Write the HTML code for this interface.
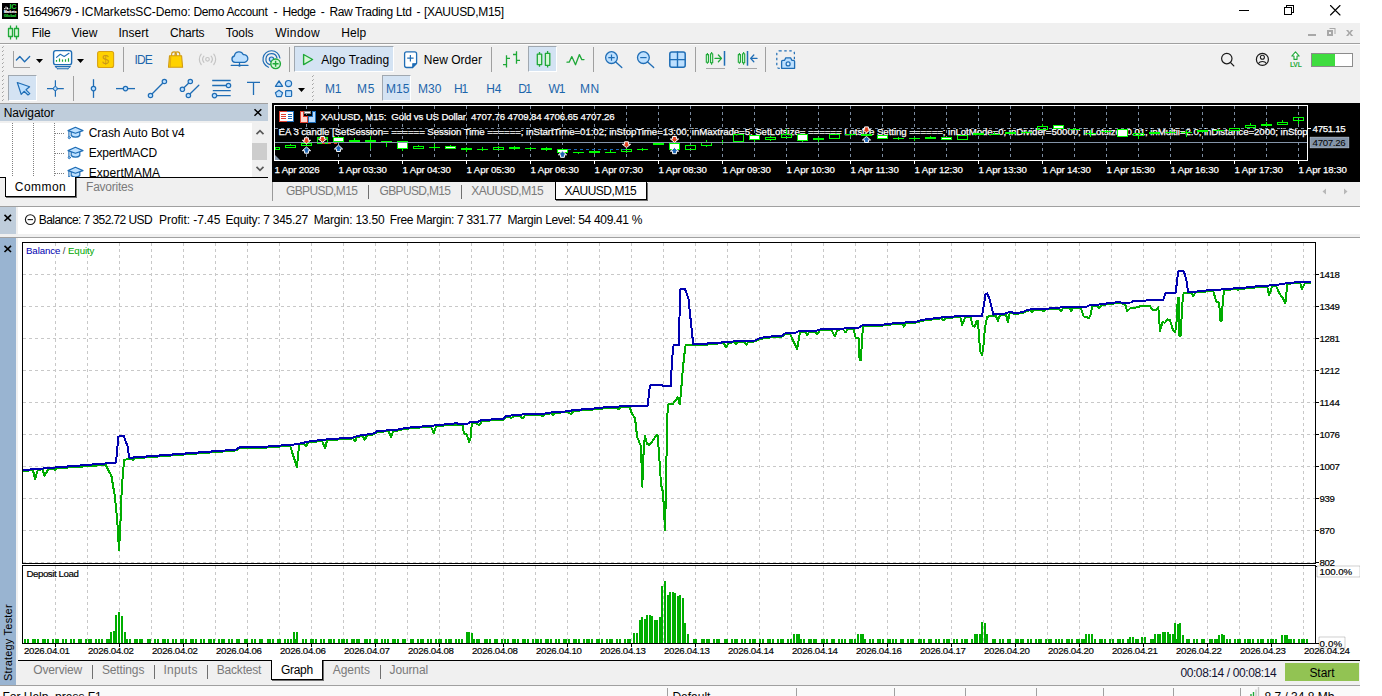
<!DOCTYPE html>
<html lang="en"><head><meta charset="utf-8"><title>MetaTrader 5</title><style>
*{box-sizing:border-box;margin:0;padding:0}
html,body{width:1382px;height:696px;overflow:hidden;background:#fff}
body{font-family:"Liberation Sans",sans-serif;font-size:12px;color:#000;position:relative}
.abs{position:absolute}
.t{position:absolute;white-space:pre;line-height:14px;height:14px}
.win{position:absolute;left:0;top:0;width:1360px;height:696px;background:#f0f0f0;overflow:hidden}
.hl{position:absolute;height:1px;background:#a0a0a0}
.vl{position:absolute;width:1px;background:#a0a0a0}
.sel{position:absolute;background:#d4e3f3;border-left:1px solid #a0a8b0;border-top:1px solid #a0a8b0;border-right:1px solid #fff;border-bottom:1px solid #fff}
.tf{color:#1c65ab}
.gr{color:#7a7a7a}
</style></head><body>
<div class="win">
<div class="abs" style="left:0;top:0;width:1360px;height:23px;background:#fff"></div>
<div class="t " style="left:23.2px;top:4.5px;letter-spacing:-0.727px;">51649679</div>
<div class="t " style="left:75.0px;top:4.5px;">-</div>
<div class="t " style="left:81.6px;top:4.5px;letter-spacing:-0.105px;">ICMarketsSC-Demo:</div>
<div class="t " style="left:193.4px;top:4.5px;letter-spacing:-0.332px;">Demo Account</div>
<div class="t " style="left:273.6px;top:4.5px;">-</div>
<div class="t " style="left:282.6px;top:4.5px;letter-spacing:-0.494px;">Hedge</div>
<div class="t " style="left:320.8px;top:4.5px;">-</div>
<div class="t " style="left:329.4px;top:4.5px;letter-spacing:-0.349px;">Raw Trading Ltd</div>
<div class="t " style="left:416.6px;top:4.5px;">-</div>
<div class="t " style="left:423.9px;top:4.5px;letter-spacing:-0.287px;">[XAUUSD,M15]</div>
<div class="t " style="left:31.8px;top:26px;letter-spacing:-0.181px;">File</div>
<div class="t " style="left:71.4px;top:26px;letter-spacing:0.068px;">View</div>
<div class="t " style="left:118.4px;top:26px;letter-spacing:0.037px;">Insert</div>
<div class="t " style="left:169.9px;top:26px;letter-spacing:-0.129px;">Charts</div>
<div class="t " style="left:225.7px;top:26px;letter-spacing:-0.029px;">Tools</div>
<div class="t " style="left:275.2px;top:26px;letter-spacing:0.342px;">Window</div>
<div class="t " style="left:341.2px;top:26px;letter-spacing:0.137px;">Help</div>
<div class="hl" style="left:0;top:43px;width:1360px"></div>
<div class="hl" style="left:0;top:44px;width:1360px;background:#fcfcfc"></div>
<div class="vl" style="left:123px;top:47px;height:25px"></div>
<div class="vl" style="left:289px;top:47px;height:25px"></div>
<div class="vl" style="left:491px;top:47px;height:25px"></div>
<div class="vl" style="left:593px;top:47px;height:25px"></div>
<div class="vl" style="left:695px;top:47px;height:25px"></div>
<div class="vl" style="left:765px;top:47px;height:25px"></div>
<div class="vl" style="left:73px;top:76px;height:25px"></div>
<div class="sel" style="left:294px;top:46px;width:100px;height:26px"></div>
<div class="sel" style="left:528px;top:46px;width:29px;height:26px"></div>
<div class="sel" style="left:8px;top:75px;width:29px;height:26px"></div>
<div class="sel" style="left:382px;top:75px;width:29px;height:26px"></div>
<div class="t tf" style="left:134.4px;top:53px;letter-spacing:-0.808px;">IDE</div>
<div class="t " style="left:321.3px;top:53px;letter-spacing:0.046px;">Algo Trading</div>
<div class="t " style="left:423.8px;top:53px;letter-spacing:0.011px;">New Order</div>
<div class="t tf" style="left:325.0px;top:81.5px;letter-spacing:-0.272px;">M1</div>
<div class="t tf" style="left:357.1px;top:81.5px;letter-spacing:0.628px;">M5</div>
<div class="t tf" style="left:386.1px;top:81.5px;letter-spacing:-0.022px;">M15</div>
<div class="t tf" style="left:418.0px;top:81.5px;letter-spacing:0.078px;">M30</div>
<div class="t tf" style="left:454.1px;top:81.5px;letter-spacing:-1.144px;">H1</div>
<div class="t tf" style="left:486.3px;top:81.5px;letter-spacing:-0.244px;">H4</div>
<div class="t tf" style="left:518.3px;top:81.5px;letter-spacing:-1.644px;">D1</div>
<div class="t tf" style="left:548.4px;top:81.5px;letter-spacing:-0.900px;">W1</div>
<div class="t tf" style="left:579.9px;top:81.5px;letter-spacing:0.728px;">MN</div>
<div class="hl" style="left:0;top:103px;width:268px"></div>
<div class="abs" style="left:0;top:104px;width:268px;height:17px;background:#bfcddb"></div>
<div class="t " style="left:3.7px;top:105.5px;letter-spacing:-0.082px;">Navigator</div>
<div class="abs" style="left:0;top:123px;width:252px;height:54px;background:#fff;overflow:hidden"><div class="t " style="left:88.7px;top:2.6999999999999993px;letter-spacing:-0.046px;">Crash Auto Bot v4</div><div class="t " style="left:88.7px;top:22.799999999999997px;letter-spacing:-0.180px;">ExpertMACD</div><div class="t " style="left:88.7px;top:42.9px;letter-spacing:0.079px;">ExpertMAMA</div></div>
<div class="abs" style="left:252px;top:123px;width:16px;height:54px;background:#f0f0f0"></div>
<div class="abs" style="left:252px;top:143px;width:15px;height:17px;background:#cdcdcd"></div>
<div class="abs" style="left:0;top:177px;width:268px;height:1px;background:#000"></div>
<div class="abs" style="left:5px;top:177px;width:71px;height:20px;background:#fff;border:1px solid #000;border-top:none;box-shadow:1px 1px 0 #707070"></div>
<div class="t " style="left:14.8px;top:179.5px;letter-spacing:0.463px;">Common</div>
<div class="t gr" style="left:86.1px;top:179.5px;letter-spacing:-0.257px;">Favorites</div>
<svg class="abs" style="left:272px;top:103px" width="1088" height="79" viewBox="272 103 1088 79">
<rect x="272" y="103" width="1088" height="79" fill="#000"/>
<g stroke="#7c8ca0" stroke-width="1" stroke-dasharray="3 3" shape-rendering="crispEdges"><line x1="306.5" y1="106" x2="306.5" y2="160"/><line x1="338.5" y1="106" x2="338.5" y2="160"/><line x1="370.5" y1="106" x2="370.5" y2="160"/><line x1="402.5" y1="106" x2="402.5" y2="160"/><line x1="434.5" y1="106" x2="434.5" y2="160"/><line x1="466.5" y1="106" x2="466.5" y2="160"/><line x1="498.5" y1="106" x2="498.5" y2="160"/><line x1="530.5" y1="106" x2="530.5" y2="160"/><line x1="562.5" y1="106" x2="562.5" y2="160"/><line x1="594.5" y1="106" x2="594.5" y2="160"/><line x1="626.5" y1="106" x2="626.5" y2="160"/><line x1="658.5" y1="106" x2="658.5" y2="160"/><line x1="690.5" y1="106" x2="690.5" y2="160"/><line x1="722.5" y1="106" x2="722.5" y2="160"/><line x1="754.5" y1="106" x2="754.5" y2="160"/><line x1="786.5" y1="106" x2="786.5" y2="160"/><line x1="818.5" y1="106" x2="818.5" y2="160"/><line x1="850.5" y1="106" x2="850.5" y2="160"/><line x1="882.5" y1="106" x2="882.5" y2="160"/><line x1="914.5" y1="106" x2="914.5" y2="160"/><line x1="946.5" y1="106" x2="946.5" y2="160"/><line x1="978.5" y1="106" x2="978.5" y2="160"/><line x1="1010.5" y1="106" x2="1010.5" y2="160"/><line x1="1042.5" y1="106" x2="1042.5" y2="160"/><line x1="1074.5" y1="106" x2="1074.5" y2="160"/><line x1="1106.5" y1="106" x2="1106.5" y2="160"/><line x1="1138.5" y1="106" x2="1138.5" y2="160"/><line x1="1170.5" y1="106" x2="1170.5" y2="160"/><line x1="1202.5" y1="106" x2="1202.5" y2="160"/><line x1="1234.5" y1="106" x2="1234.5" y2="160"/><line x1="1266.5" y1="106" x2="1266.5" y2="160"/><line x1="1298.5" y1="106" x2="1298.5" y2="160"/>
<line x1="275" y1="128.5" x2="1307" y2="128.5"/></g>
<g font-family="'Liberation Sans',sans-serif" font-size="9.7" fill="#fff" stroke="#fff" stroke-width="0.25"><svg x="275" y="124" width="1032" height="14" viewBox="275 124 1032 14"><text x="278.5" y="135" textLength="1057" lengthAdjust="spacing">EA 3 candle [SetSession= ====== Session Time ======; inStartTime=01:02; inStopTime=13:00; inMaxtrade=5; SetLotsize= ====== Lotsize Setting ======; inLotMode=0; inDivider=50000; inLotsize=0.01; inMultii=2.0; inDistance=2000; inStoploss=0</text></svg></g>
<g stroke="#00ff00" stroke-width="1" fill="none" shape-rendering="crispEdges"><rect x="275.5" y="147.5" width="4.0" height="2" fill="none"/><line x1="290.5" y1="144" x2="290.5" y2="145"/><rect x="285.5" y="145.5" width="10.0" height="2" fill="none"/><rect x="301.5" y="143.5" width="10.0" height="2" fill="none"/><rect x="317.5" y="137.5" width="10.0" height="6" fill="none"/><rect x="333.5" y="137.5" width="10.0" height="4" fill="#fff"/><line x1="354.5" y1="138" x2="354.5" y2="140"/><rect x="349.5" y="140.5" width="10.0" height="1" fill="none"/><rect x="365.0" y="140" width="11" height="2" fill="#00ff00" stroke="none"/><line x1="370.5" y1="136" x2="370.5" y2="149"/><line x1="381.0" y1="141.5" x2="392.0" y2="141.5"/><line x1="386.5" y1="141" x2="386.5" y2="147"/><line x1="402.5" y1="149" x2="402.5" y2="151"/><rect x="397.5" y="141.5" width="10.0" height="7" fill="#fff"/><line x1="418.5" y1="145" x2="418.5" y2="146"/><rect x="413.5" y="146.5" width="10.0" height="2" fill="none"/><line x1="429.0" y1="147.5" x2="440.0" y2="147.5"/><line x1="434.5" y1="144" x2="434.5" y2="149"/><line x1="450.5" y1="145" x2="450.5" y2="146"/><rect x="445.5" y="146.5" width="10.0" height="2" fill="#fff"/><rect x="461.0" y="148" width="11" height="2" fill="#00ff00" stroke="none"/><line x1="466.5" y1="147" x2="466.5" y2="152"/><line x1="477.0" y1="149.5" x2="488.0" y2="149.5"/><line x1="482.5" y1="147" x2="482.5" y2="151"/><line x1="498.5" y1="146" x2="498.5" y2="147"/><rect x="493.5" y="147.5" width="10.0" height="2" fill="none"/><rect x="509.0" y="147" width="11" height="2" fill="#00ff00" stroke="none"/><line x1="514.5" y1="146" x2="514.5" y2="150"/><line x1="525.0" y1="148.5" x2="536.0" y2="148.5"/><line x1="530.5" y1="147" x2="530.5" y2="150"/><rect x="541.0" y="148" width="11" height="2" fill="#00ff00" stroke="none"/><line x1="546.5" y1="147" x2="546.5" y2="151"/><rect x="557.5" y="149.5" width="10.0" height="3" fill="#fff"/><line x1="573.0" y1="152.5" x2="584.0" y2="152.5"/><line x1="578.5" y1="152" x2="578.5" y2="154"/><rect x="589.0" y="151" width="11" height="2" fill="#00ff00" stroke="none"/><line x1="594.5" y1="152" x2="594.5" y2="154"/><line x1="605.0" y1="152.5" x2="616.0" y2="152.5"/><line x1="610.5" y1="150" x2="610.5" y2="153"/><line x1="626.5" y1="152" x2="626.5" y2="153"/><rect x="621.5" y="149.5" width="10.0" height="2" fill="none"/><line x1="637.0" y1="149.5" x2="648.0" y2="149.5"/><line x1="642.5" y1="148" x2="642.5" y2="151"/><rect x="653.0" y="143" width="11" height="2" fill="#00ff00" stroke="none"/><line x1="658.5" y1="143" x2="658.5" y2="145"/><rect x="669.5" y="143.5" width="10.0" height="6" fill="#fff"/><rect x="685.5" y="145.5" width="10.0" height="4" fill="none"/><line x1="706.5" y1="140" x2="706.5" y2="142"/><line x1="706.5" y1="146" x2="706.5" y2="147"/><rect x="701.5" y="142.5" width="10.0" height="3" fill="none"/><line x1="717.0" y1="142.5" x2="728.0" y2="142.5"/><line x1="722.5" y1="140" x2="722.5" y2="144"/><rect x="733.5" y="134.5" width="10.0" height="7" fill="none"/><line x1="754.5" y1="140" x2="754.5" y2="142"/><rect x="749.5" y="135.5" width="10.0" height="4" fill="#fff"/><line x1="770.5" y1="136" x2="770.5" y2="137"/><line x1="770.5" y1="140" x2="770.5" y2="141"/><rect x="765.5" y="137.5" width="10.0" height="2" fill="none"/><line x1="786.5" y1="129" x2="786.5" y2="134"/><rect x="781.5" y="134.5" width="10.0" height="3" fill="none"/><line x1="802.5" y1="141" x2="802.5" y2="142"/><rect x="797.5" y="134.5" width="10.0" height="6" fill="#fff"/><line x1="818.5" y1="137" x2="818.5" y2="138"/><line x1="818.5" y1="140" x2="818.5" y2="142"/><rect x="813.5" y="138.5" width="10.0" height="1" fill="none"/><rect x="829.5" y="134.5" width="10.0" height="4" fill="none"/><line x1="845.0" y1="134.5" x2="856.0" y2="134.5"/><line x1="850.5" y1="134" x2="850.5" y2="137"/><rect x="861.5" y="134.5" width="10.0" height="1" fill="none"/><rect x="877.5" y="135.5" width="10.0" height="3" fill="#fff"/><line x1="893.0" y1="138.5" x2="904.0" y2="138.5"/><line x1="898.5" y1="137" x2="898.5" y2="140"/><line x1="909.0" y1="138.5" x2="920.0" y2="138.5"/><line x1="914.5" y1="137" x2="914.5" y2="141"/><rect x="925.0" y="137" width="11" height="2" fill="#00ff00" stroke="none"/><line x1="930.5" y1="136" x2="930.5" y2="138"/><rect x="941.5" y="137.5" width="10.0" height="2" fill="#fff"/><rect x="957.5" y="135.5" width="10.0" height="4" fill="none"/><rect x="973.5" y="133.5" width="10.0" height="1" fill="none"/><line x1="989.0" y1="134.5" x2="1000.0" y2="134.5"/><line x1="994.5" y1="132" x2="994.5" y2="135"/><rect x="1005.5" y="132.5" width="10.0" height="1" fill="none"/><line x1="1021.0" y1="132.5" x2="1032.0" y2="132.5"/><line x1="1026.5" y1="131" x2="1026.5" y2="134"/><line x1="1042.5" y1="124" x2="1042.5" y2="126"/><rect x="1037.5" y="126.5" width="10.0" height="3" fill="none"/><rect x="1053.5" y="125.5" width="10.0" height="3" fill="#fff"/><line x1="1069.0" y1="129.5" x2="1080.0" y2="129.5"/><line x1="1074.5" y1="128" x2="1074.5" y2="130"/><line x1="1085.0" y1="133.5" x2="1096.0" y2="133.5"/><line x1="1090.5" y1="130" x2="1090.5" y2="137"/><line x1="1101.0" y1="131.5" x2="1112.0" y2="131.5"/><line x1="1106.5" y1="130" x2="1106.5" y2="133"/><rect x="1117.5" y="129.5" width="10.0" height="7" fill="#fff"/><line x1="1138.5" y1="136" x2="1138.5" y2="139"/><rect x="1133.5" y="133.5" width="10.0" height="2" fill="none"/><rect x="1149.0" y="132" width="11" height="2" fill="#00ff00" stroke="none"/><line x1="1154.5" y1="132" x2="1154.5" y2="134"/><line x1="1165.0" y1="132.5" x2="1176.0" y2="132.5"/><line x1="1170.5" y1="131" x2="1170.5" y2="133"/><line x1="1181.0" y1="132.5" x2="1192.0" y2="132.5"/><line x1="1186.5" y1="130" x2="1186.5" y2="137"/><rect x="1197.5" y="130.5" width="10.0" height="1" fill="none"/><line x1="1213.0" y1="130.5" x2="1224.0" y2="130.5"/><line x1="1218.5" y1="129" x2="1218.5" y2="131"/><rect x="1229.5" y="128.5" width="10.0" height="2" fill="none"/><line x1="1250.5" y1="123" x2="1250.5" y2="125"/><rect x="1245.5" y="125.5" width="10.0" height="2" fill="none"/><rect x="1261.0" y="124" width="11" height="2" fill="#00ff00" stroke="none"/><line x1="1266.5" y1="122" x2="1266.5" y2="126"/><line x1="1282.5" y1="120" x2="1282.5" y2="122"/><rect x="1277.5" y="122.5" width="10.0" height="2" fill="none"/><line x1="1298.5" y1="121" x2="1298.5" y2="124"/><rect x="1293.5" y="117.5" width="10.0" height="3" fill="none"/></g>
<line x1="275" y1="142.5" x2="1307" y2="142.5" stroke="#8494a8" shape-rendering="crispEdges"/>
<line x1="322" y1="143.5" x2="337" y2="143.5" stroke="#e2401c" stroke-dasharray="3 3" shape-rendering="crispEdges"/>
<line x1="568" y1="149.5" x2="626" y2="149.5" stroke="#1c64b4" stroke-dasharray="3 3" shape-rendering="crispEdges"/>
<path d="M304.6 137.8H308.4V140.3H310.6L306.5 143.79999999999998L302.4 140.3H304.6Z" fill="#e2401c" stroke="#fff" stroke-width="1" stroke-linejoin="miter"/><path d="M320.6 136.5H324.4V139.0H326.6L322.5 142.2L318.4 139.0H320.6Z" fill="#e2401c" stroke="#fff" stroke-width="1" stroke-linejoin="miter"/><path d="M624.6 141.8H628.4V144.3H630.6L626.5 147.6L622.4 144.3H624.6Z" fill="#e2401c" stroke="#fff" stroke-width="1" stroke-linejoin="miter"/><path d="M672.6 136.5H676.4V139.0H678.6L674.5 142.4L670.4 139.0H672.6Z" fill="#e2401c" stroke="#fff" stroke-width="1" stroke-linejoin="miter"/><path d="M864.6 126.9H868.4V129.4H870.6L866.5 132.79999999999998L862.4 129.4H864.6Z" fill="#e2401c" stroke="#fff" stroke-width="1" stroke-linejoin="miter"/><path d="M304.6 153.2H308.4V150.7H310.6L306.5 147.0L302.4 150.7H304.6Z" fill="#1c64b4" stroke="#fff" stroke-width="1" stroke-linejoin="miter"/><path d="M336.6 151.5H340.4V149.0H342.6L338.5 145.1L334.4 149.0H336.6Z" fill="#1c64b4" stroke="#fff" stroke-width="1" stroke-linejoin="miter"/><path d="M560.6 157.3H564.4V154.8H566.6L562.5 151.0L558.4 154.8H560.6Z" fill="#1c64b4" stroke="#fff" stroke-width="1" stroke-linejoin="miter"/><path d="M672.6 153.7H676.4V151.2H678.6L674.5 147.6L670.4 151.2H672.6Z" fill="#1c64b4" stroke="#fff" stroke-width="1" stroke-linejoin="miter"/><path d="M864.6 142.5H868.4V140.0H870.6L866.5 136.4L862.4 140.0H864.6Z" fill="#1c64b4" stroke="#fff" stroke-width="1" stroke-linejoin="miter"/>
<path d="M275 155L280 160H275Z" fill="#8494a8"/>
<g stroke="#fff" stroke-width="1" fill="none" shape-rendering="crispEdges"><path d="M274.5 160.5V105.5H1307.5V160.5"/><path d="M274 160.5H1308"/><line x1="338.5" y1="160" x2="338.5" y2="164"/><line x1="402.5" y1="160" x2="402.5" y2="164"/><line x1="466.5" y1="160" x2="466.5" y2="164"/><line x1="530.5" y1="160" x2="530.5" y2="164"/><line x1="594.5" y1="160" x2="594.5" y2="164"/><line x1="658.5" y1="160" x2="658.5" y2="164"/><line x1="722.5" y1="160" x2="722.5" y2="164"/><line x1="786.5" y1="160" x2="786.5" y2="164"/><line x1="850.5" y1="160" x2="850.5" y2="164"/><line x1="914.5" y1="160" x2="914.5" y2="164"/><line x1="978.5" y1="160" x2="978.5" y2="164"/><line x1="1042.5" y1="160" x2="1042.5" y2="164"/><line x1="1106.5" y1="160" x2="1106.5" y2="164"/><line x1="1170.5" y1="160" x2="1170.5" y2="164"/><line x1="1234.5" y1="160" x2="1234.5" y2="164"/><line x1="1298.5" y1="160" x2="1298.5" y2="164"/><line x1="1308" y1="128.5" x2="1311" y2="128.5"/></g>
<g font-family="'Liberation Sans',sans-serif" font-size="9.7" fill="#fff" stroke="#fff" stroke-width="0.25"><text x="274.5" y="172.6" textLength="45.2" lengthAdjust="spacing">1 Apr 2026</text><text x="338.5" y="172.6" textLength="48.3" lengthAdjust="spacing">1 Apr 03:30</text><text x="402.5" y="172.6" textLength="48.3" lengthAdjust="spacing">1 Apr 04:30</text><text x="466.5" y="172.6" textLength="48.3" lengthAdjust="spacing">1 Apr 05:30</text><text x="530.5" y="172.6" textLength="48.3" lengthAdjust="spacing">1 Apr 06:30</text><text x="594.5" y="172.6" textLength="48.3" lengthAdjust="spacing">1 Apr 07:30</text><text x="658.5" y="172.6" textLength="48.3" lengthAdjust="spacing">1 Apr 08:30</text><text x="722.5" y="172.6" textLength="48.3" lengthAdjust="spacing">1 Apr 09:30</text><text x="786.5" y="172.6" textLength="48.3" lengthAdjust="spacing">1 Apr 10:30</text><text x="850.5" y="172.6" textLength="48.3" lengthAdjust="spacing">1 Apr 11:30</text><text x="914.5" y="172.6" textLength="48.3" lengthAdjust="spacing">1 Apr 12:30</text><text x="978.5" y="172.6" textLength="48.3" lengthAdjust="spacing">1 Apr 13:30</text><text x="1042.5" y="172.6" textLength="48.3" lengthAdjust="spacing">1 Apr 14:30</text><text x="1106.5" y="172.6" textLength="48.3" lengthAdjust="spacing">1 Apr 15:30</text><text x="1170.5" y="172.6" textLength="48.3" lengthAdjust="spacing">1 Apr 16:30</text><text x="1234.5" y="172.6" textLength="48.3" lengthAdjust="spacing">1 Apr 17:30</text><text x="1298.5" y="172.6" textLength="48.3" lengthAdjust="spacing">1 Apr 18:30</text>
<text x="320.7" y="120" xml:space="preserve" textLength="294" lengthAdjust="spacing">XAUUSD, M15:  Gold vs US Dollar  4707.76 4709.84 4706.65 4707.26</text>
<text x="1312.6" y="132.3" textLength="33.1" lengthAdjust="spacing">4751.15</text>
<rect x="1310" y="137" width="39" height="11" fill="#8494a8"/><text x="1312.6" y="146.3" fill="#000" stroke="none" textLength="33.1" lengthAdjust="spacing">4707.26</text></g>
<g shape-rendering="crispEdges">
<rect x="279" y="111" width="8" height="11" fill="#e04030"/><rect x="287" y="111" width="7" height="11" fill="#1c6cb8"/><rect x="280" y="112" width="13" height="9" fill="#fff"/>
<path d="M281 114.5H286M281 116.5H286M281 118.5H286" stroke="#e04030"/><path d="M288 114.5H292M288 116.5H292M288 118.5H292" stroke="#1c6cb8"/>
<path d="M300 111H303V116H307V122H300Z" fill="#ffd8d0" stroke="#e04030"/><path d="M315 111H312V116H308V122H315Z" fill="#b8dcff" stroke="#1c6cb8"/><rect x="304" y="111" width="7" height="3" fill="#888"/><rect x="305" y="112" width="5" height="1" fill="#fff"/>
</g>
</svg>
<div class="vl" style="left:272px;top:182px;height:19px;background:#9a9a9a"></div>
<div class="t gr" style="left:285.9px;top:184px;letter-spacing:-0.584px;">GBPUSD,M15</div>
<div class="t gr" style="left:379.6px;top:184px;letter-spacing:-0.673px;">GBPUSD,M15</div>
<div class="t gr" style="left:471.2px;top:184px;letter-spacing:-0.476px;">XAUUSD,M15</div>
<div class="vl" style="left:368px;top:185px;height:14px;background:#707070"></div>
<div class="vl" style="left:461px;top:185px;height:14px;background:#707070"></div>
<div class="abs" style="left:555px;top:182px;width:92px;height:18px;background:#fff;border:1px solid #000;border-top:none;box-shadow:1px 1px 0 #707070"></div>
<div class="t " style="left:564.4px;top:184px;letter-spacing:-0.476px;">XAUUSD,M15</div>
<div class="hl" style="left:0;top:206px;width:1360px"></div>
<div class="abs" style="left:0;top:207px;width:16px;height:27px;background:#bfcddb"></div>
<div class="abs" style="left:18px;top:207px;width:1342px;height:27px;background:#fff"></div>
<div class="t " style="left:38.8px;top:212.5px;letter-spacing:-0.581px;">Balance: 7 352.72 USD</div>
<div class="t " style="left:159.0px;top:212.5px;letter-spacing:-0.053px;">Profit: -7.45</div>
<div class="t " style="left:225.6px;top:212.5px;letter-spacing:-0.282px;">Equity: 7 345.27</div>
<div class="t " style="left:313.8px;top:212.5px;letter-spacing:-0.216px;">Margin: 13.50</div>
<div class="t " style="left:389.8px;top:212.5px;letter-spacing:-0.314px;">Free Margin: 7 331.77</div>
<div class="t " style="left:507.4px;top:212.5px;letter-spacing:-0.324px;">Margin Level: 54 409.41 %</div>
<div class="hl" style="left:0;top:237px;width:1360px"></div>
<div class="abs" style="left:0;top:238px;width:16px;height:447px;background:#99b4d1"></div>
<div class="abs" style="left:18px;top:238px;width:1342px;height:422px;background:#fff"></div>
<div class="abs" style="left:18px;top:660px;width:1342px;height:1px;background:#000"></div>
<div class="t" style="left:-32px;top:634px;width:80px;font-size:11px;letter-spacing:0.2px;transform:rotate(-90deg);transform-origin:center">Strategy Tester</div>
<svg class="abs" style="left:0;top:0" width="1382" height="696" viewBox="0 0 1382 696">
<g stroke="#c8c8c8" stroke-width="1" stroke-dasharray="3 3" shape-rendering="crispEdges"><line x1="55.5" y1="243" x2="55.5" y2="563"/><line x1="87.5" y1="243" x2="87.5" y2="563"/><line x1="119.5" y1="243" x2="119.5" y2="563"/><line x1="151.5" y1="243" x2="151.5" y2="563"/><line x1="183.5" y1="243" x2="183.5" y2="563"/><line x1="215.5" y1="243" x2="215.5" y2="563"/><line x1="247.5" y1="243" x2="247.5" y2="563"/><line x1="279.5" y1="243" x2="279.5" y2="563"/><line x1="311.5" y1="243" x2="311.5" y2="563"/><line x1="343.5" y1="243" x2="343.5" y2="563"/><line x1="375.5" y1="243" x2="375.5" y2="563"/><line x1="407.5" y1="243" x2="407.5" y2="563"/><line x1="439.5" y1="243" x2="439.5" y2="563"/><line x1="471.5" y1="243" x2="471.5" y2="563"/><line x1="503.5" y1="243" x2="503.5" y2="563"/><line x1="535.5" y1="243" x2="535.5" y2="563"/><line x1="567.5" y1="243" x2="567.5" y2="563"/><line x1="599.5" y1="243" x2="599.5" y2="563"/><line x1="631.5" y1="243" x2="631.5" y2="563"/><line x1="663.5" y1="243" x2="663.5" y2="563"/><line x1="695.5" y1="243" x2="695.5" y2="563"/><line x1="727.5" y1="243" x2="727.5" y2="563"/><line x1="759.5" y1="243" x2="759.5" y2="563"/><line x1="791.5" y1="243" x2="791.5" y2="563"/><line x1="823.5" y1="243" x2="823.5" y2="563"/><line x1="855.5" y1="243" x2="855.5" y2="563"/><line x1="887.5" y1="243" x2="887.5" y2="563"/><line x1="919.5" y1="243" x2="919.5" y2="563"/><line x1="951.5" y1="243" x2="951.5" y2="563"/><line x1="983.5" y1="243" x2="983.5" y2="563"/><line x1="1015.5" y1="243" x2="1015.5" y2="563"/><line x1="1047.5" y1="243" x2="1047.5" y2="563"/><line x1="1079.5" y1="243" x2="1079.5" y2="563"/><line x1="1111.5" y1="243" x2="1111.5" y2="563"/><line x1="1143.5" y1="243" x2="1143.5" y2="563"/><line x1="1175.5" y1="243" x2="1175.5" y2="563"/><line x1="1207.5" y1="243" x2="1207.5" y2="563"/><line x1="1239.5" y1="243" x2="1239.5" y2="563"/><line x1="1271.5" y1="243" x2="1271.5" y2="563"/><line x1="1303.5" y1="243" x2="1303.5" y2="563"/><line x1="23" y1="274.5" x2="1315" y2="274.5"/><line x1="23" y1="306.5" x2="1315" y2="306.5"/><line x1="23" y1="338.5" x2="1315" y2="338.5"/><line x1="23" y1="370.5" x2="1315" y2="370.5"/><line x1="23" y1="402.5" x2="1315" y2="402.5"/><line x1="23" y1="434.5" x2="1315" y2="434.5"/><line x1="23" y1="466.5" x2="1315" y2="466.5"/><line x1="23" y1="498.5" x2="1315" y2="498.5"/><line x1="23" y1="530.5" x2="1315" y2="530.5"/><line x1="23" y1="562.5" x2="1315" y2="562.5"/><line x1="55.5" y1="566" x2="55.5" y2="643"/><line x1="87.5" y1="566" x2="87.5" y2="643"/><line x1="119.5" y1="566" x2="119.5" y2="643"/><line x1="151.5" y1="566" x2="151.5" y2="643"/><line x1="183.5" y1="566" x2="183.5" y2="643"/><line x1="215.5" y1="566" x2="215.5" y2="643"/><line x1="247.5" y1="566" x2="247.5" y2="643"/><line x1="279.5" y1="566" x2="279.5" y2="643"/><line x1="311.5" y1="566" x2="311.5" y2="643"/><line x1="343.5" y1="566" x2="343.5" y2="643"/><line x1="375.5" y1="566" x2="375.5" y2="643"/><line x1="407.5" y1="566" x2="407.5" y2="643"/><line x1="439.5" y1="566" x2="439.5" y2="643"/><line x1="471.5" y1="566" x2="471.5" y2="643"/><line x1="503.5" y1="566" x2="503.5" y2="643"/><line x1="535.5" y1="566" x2="535.5" y2="643"/><line x1="567.5" y1="566" x2="567.5" y2="643"/><line x1="599.5" y1="566" x2="599.5" y2="643"/><line x1="631.5" y1="566" x2="631.5" y2="643"/><line x1="663.5" y1="566" x2="663.5" y2="643"/><line x1="695.5" y1="566" x2="695.5" y2="643"/><line x1="727.5" y1="566" x2="727.5" y2="643"/><line x1="759.5" y1="566" x2="759.5" y2="643"/><line x1="791.5" y1="566" x2="791.5" y2="643"/><line x1="823.5" y1="566" x2="823.5" y2="643"/><line x1="855.5" y1="566" x2="855.5" y2="643"/><line x1="887.5" y1="566" x2="887.5" y2="643"/><line x1="919.5" y1="566" x2="919.5" y2="643"/><line x1="951.5" y1="566" x2="951.5" y2="643"/><line x1="983.5" y1="566" x2="983.5" y2="643"/><line x1="1015.5" y1="566" x2="1015.5" y2="643"/><line x1="1047.5" y1="566" x2="1047.5" y2="643"/><line x1="1079.5" y1="566" x2="1079.5" y2="643"/><line x1="1111.5" y1="566" x2="1111.5" y2="643"/><line x1="1143.5" y1="566" x2="1143.5" y2="643"/><line x1="1175.5" y1="566" x2="1175.5" y2="643"/><line x1="1207.5" y1="566" x2="1207.5" y2="643"/><line x1="1239.5" y1="566" x2="1239.5" y2="643"/><line x1="1271.5" y1="566" x2="1271.5" y2="643"/><line x1="1303.5" y1="566" x2="1303.5" y2="643"/></g>
<g fill="#00ae00" shape-rendering="crispEdges"><rect x="24" y="639" width="2" height="4"/><rect x="27" y="639" width="2" height="4"/><rect x="32" y="639" width="2" height="4"/><rect x="34" y="639" width="2" height="4"/><rect x="37" y="639" width="2" height="4"/><rect x="42" y="639" width="2" height="4"/><rect x="44" y="639" width="2" height="4"/><rect x="47" y="639" width="2" height="4"/><rect x="52" y="639" width="2" height="4"/><rect x="55" y="639" width="2" height="4"/><rect x="57" y="639" width="2" height="4"/><rect x="62" y="639" width="2" height="4"/><rect x="65" y="639" width="2" height="4"/><rect x="70" y="639" width="2" height="4"/><rect x="73" y="639" width="2" height="4"/><rect x="78" y="639" width="2" height="4"/><rect x="80" y="639" width="2" height="4"/><rect x="85" y="639" width="2" height="4"/><rect x="88" y="639" width="2" height="4"/><rect x="90" y="639" width="2" height="4"/><rect x="95" y="639" width="2" height="4"/><rect x="98" y="639" width="2" height="4"/><rect x="101" y="639" width="2" height="4"/><rect x="106" y="639" width="2" height="4"/><rect x="108" y="639" width="2" height="4"/><rect x="126" y="639" width="2" height="4"/><rect x="129" y="639" width="2" height="4"/><rect x="134" y="639" width="2" height="4"/><rect x="136" y="639" width="2" height="4"/><rect x="139" y="639" width="2" height="4"/><rect x="141" y="639" width="2" height="4"/><rect x="147" y="639" width="2" height="4"/><rect x="149" y="639" width="2" height="4"/><rect x="154" y="639" width="2" height="4"/><rect x="157" y="639" width="2" height="4"/><rect x="162" y="639" width="2" height="4"/><rect x="164" y="639" width="2" height="4"/><rect x="167" y="639" width="2" height="4"/><rect x="172" y="639" width="2" height="4"/><rect x="175" y="639" width="2" height="4"/><rect x="180" y="639" width="2" height="4"/><rect x="182" y="639" width="2" height="4"/><rect x="185" y="639" width="2" height="4"/><rect x="190" y="639" width="2" height="4"/><rect x="192" y="639" width="2" height="4"/><rect x="195" y="639" width="2" height="4"/><rect x="200" y="639" width="2" height="4"/><rect x="203" y="639" width="2" height="4"/><rect x="208" y="639" width="2" height="4"/><rect x="210" y="639" width="2" height="4"/><rect x="213" y="639" width="2" height="4"/><rect x="218" y="639" width="2" height="4"/><rect x="221" y="639" width="2" height="4"/><rect x="223" y="639" width="2" height="4"/><rect x="228" y="639" width="2" height="4"/><rect x="231" y="639" width="2" height="4"/><rect x="236" y="639" width="2" height="4"/><rect x="238" y="639" width="2" height="4"/><rect x="244" y="639" width="2" height="4"/><rect x="246" y="639" width="2" height="4"/><rect x="251" y="639" width="2" height="4"/><rect x="254" y="639" width="2" height="4"/><rect x="259" y="639" width="2" height="4"/><rect x="261" y="639" width="2" height="4"/><rect x="267" y="639" width="2" height="4"/><rect x="269" y="639" width="2" height="4"/><rect x="272" y="639" width="2" height="4"/><rect x="277" y="639" width="2" height="4"/><rect x="279" y="639" width="2" height="4"/><rect x="284" y="639" width="2" height="4"/><rect x="287" y="639" width="2" height="4"/><rect x="290" y="639" width="2" height="4"/><rect x="295" y="639" width="2" height="4"/><rect x="302" y="639" width="2" height="4"/><rect x="305" y="639" width="2" height="4"/><rect x="310" y="639" width="2" height="4"/><rect x="312" y="639" width="2" height="4"/><rect x="315" y="639" width="2" height="4"/><rect x="320" y="639" width="2" height="4"/><rect x="323" y="639" width="2" height="4"/><rect x="328" y="639" width="2" height="4"/><rect x="330" y="639" width="2" height="4"/><rect x="333" y="639" width="2" height="4"/><rect x="338" y="639" width="2" height="4"/><rect x="341" y="639" width="2" height="4"/><rect x="343" y="639" width="2" height="4"/><rect x="346" y="639" width="2" height="4"/><rect x="351" y="639" width="2" height="4"/><rect x="353" y="639" width="2" height="4"/><rect x="356" y="639" width="2" height="4"/><rect x="358" y="639" width="2" height="4"/><rect x="364" y="639" width="2" height="4"/><rect x="366" y="639" width="2" height="4"/><rect x="369" y="639" width="2" height="4"/><rect x="374" y="639" width="2" height="4"/><rect x="376" y="639" width="2" height="4"/><rect x="381" y="639" width="2" height="4"/><rect x="384" y="639" width="2" height="4"/><rect x="387" y="639" width="2" height="4"/><rect x="392" y="639" width="2" height="4"/><rect x="394" y="639" width="2" height="4"/><rect x="397" y="639" width="2" height="4"/><rect x="402" y="639" width="2" height="4"/><rect x="404" y="639" width="2" height="4"/><rect x="410" y="639" width="2" height="4"/><rect x="412" y="639" width="2" height="4"/><rect x="417" y="639" width="2" height="4"/><rect x="420" y="639" width="2" height="4"/><rect x="422" y="639" width="2" height="4"/><rect x="427" y="639" width="2" height="4"/><rect x="430" y="639" width="2" height="4"/><rect x="435" y="639" width="2" height="4"/><rect x="438" y="639" width="2" height="4"/><rect x="440" y="639" width="2" height="4"/><rect x="445" y="639" width="2" height="4"/><rect x="448" y="639" width="2" height="4"/><rect x="450" y="639" width="2" height="4"/><rect x="455" y="639" width="2" height="4"/><rect x="458" y="639" width="2" height="4"/><rect x="461" y="639" width="2" height="4"/><rect x="473" y="639" width="2" height="4"/><rect x="476" y="639" width="2" height="4"/><rect x="478" y="639" width="2" height="4"/><rect x="484" y="639" width="2" height="4"/><rect x="486" y="639" width="2" height="4"/><rect x="489" y="639" width="2" height="4"/><rect x="494" y="639" width="2" height="4"/><rect x="496" y="639" width="2" height="4"/><rect x="501" y="639" width="2" height="4"/><rect x="504" y="639" width="2" height="4"/><rect x="507" y="639" width="2" height="4"/><rect x="512" y="639" width="2" height="4"/><rect x="514" y="639" width="2" height="4"/><rect x="517" y="639" width="2" height="4"/><rect x="522" y="639" width="2" height="4"/><rect x="524" y="639" width="2" height="4"/><rect x="527" y="639" width="2" height="4"/><rect x="532" y="639" width="2" height="4"/><rect x="535" y="639" width="2" height="4"/><rect x="537" y="639" width="2" height="4"/><rect x="540" y="639" width="2" height="4"/><rect x="545" y="639" width="2" height="4"/><rect x="547" y="639" width="2" height="4"/><rect x="550" y="639" width="2" height="4"/><rect x="555" y="639" width="2" height="4"/><rect x="558" y="639" width="2" height="4"/><rect x="563" y="639" width="2" height="4"/><rect x="565" y="639" width="2" height="4"/><rect x="568" y="639" width="2" height="4"/><rect x="573" y="639" width="2" height="4"/><rect x="575" y="639" width="2" height="4"/><rect x="578" y="639" width="2" height="4"/><rect x="583" y="639" width="2" height="4"/><rect x="586" y="639" width="2" height="4"/><rect x="588" y="639" width="2" height="4"/><rect x="591" y="639" width="2" height="4"/><rect x="596" y="639" width="2" height="4"/><rect x="598" y="639" width="2" height="4"/><rect x="601" y="639" width="2" height="4"/><rect x="606" y="639" width="2" height="4"/><rect x="609" y="639" width="2" height="4"/><rect x="611" y="639" width="2" height="4"/><rect x="616" y="639" width="2" height="4"/><rect x="619" y="639" width="2" height="4"/><rect x="624" y="639" width="2" height="4"/><rect x="627" y="639" width="2" height="4"/><rect x="629" y="639" width="2" height="4"/><rect x="693" y="639" width="2" height="4"/><rect x="695" y="639" width="2" height="4"/><rect x="701" y="639" width="2" height="4"/><rect x="703" y="639" width="2" height="4"/><rect x="706" y="639" width="2" height="4"/><rect x="708" y="639" width="2" height="4"/><rect x="713" y="639" width="2" height="4"/><rect x="716" y="639" width="2" height="4"/><rect x="718" y="639" width="2" height="4"/><rect x="724" y="639" width="2" height="4"/><rect x="726" y="639" width="2" height="4"/><rect x="731" y="639" width="2" height="4"/><rect x="734" y="639" width="2" height="4"/><rect x="736" y="639" width="2" height="4"/><rect x="741" y="639" width="2" height="4"/><rect x="744" y="639" width="2" height="4"/><rect x="749" y="639" width="2" height="4"/><rect x="752" y="639" width="2" height="4"/><rect x="754" y="639" width="2" height="4"/><rect x="759" y="639" width="2" height="4"/><rect x="762" y="639" width="2" height="4"/><rect x="767" y="639" width="2" height="4"/><rect x="769" y="639" width="2" height="4"/><rect x="772" y="639" width="2" height="4"/><rect x="777" y="639" width="2" height="4"/><rect x="780" y="639" width="2" height="4"/><rect x="782" y="639" width="2" height="4"/><rect x="787" y="639" width="2" height="4"/><rect x="790" y="639" width="2" height="4"/><rect x="800" y="639" width="2" height="4"/><rect x="803" y="639" width="2" height="4"/><rect x="808" y="639" width="2" height="4"/><rect x="810" y="639" width="2" height="4"/><rect x="813" y="639" width="2" height="4"/><rect x="815" y="639" width="2" height="4"/><rect x="821" y="639" width="2" height="4"/><rect x="823" y="639" width="2" height="4"/><rect x="826" y="639" width="2" height="4"/><rect x="831" y="639" width="2" height="4"/><rect x="833" y="639" width="2" height="4"/><rect x="838" y="639" width="2" height="4"/><rect x="841" y="639" width="2" height="4"/><rect x="844" y="639" width="2" height="4"/><rect x="849" y="639" width="2" height="4"/><rect x="851" y="639" width="2" height="4"/><rect x="854" y="639" width="2" height="4"/><rect x="864" y="639" width="2" height="4"/><rect x="869" y="639" width="2" height="4"/><rect x="872" y="639" width="2" height="4"/><rect x="877" y="639" width="2" height="4"/><rect x="879" y="639" width="2" height="4"/><rect x="882" y="639" width="2" height="4"/><rect x="887" y="639" width="2" height="4"/><rect x="889" y="639" width="2" height="4"/><rect x="892" y="639" width="2" height="4"/><rect x="895" y="639" width="2" height="4"/><rect x="900" y="639" width="2" height="4"/><rect x="902" y="639" width="2" height="4"/><rect x="907" y="639" width="2" height="4"/><rect x="910" y="639" width="2" height="4"/><rect x="912" y="639" width="2" height="4"/><rect x="918" y="639" width="2" height="4"/><rect x="920" y="639" width="2" height="4"/><rect x="923" y="639" width="2" height="4"/><rect x="928" y="639" width="2" height="4"/><rect x="930" y="639" width="2" height="4"/><rect x="935" y="639" width="2" height="4"/><rect x="938" y="639" width="2" height="4"/><rect x="943" y="639" width="2" height="4"/><rect x="946" y="639" width="2" height="4"/><rect x="948" y="639" width="2" height="4"/><rect x="953" y="639" width="2" height="4"/><rect x="956" y="639" width="2" height="4"/><rect x="961" y="639" width="2" height="4"/><rect x="964" y="639" width="2" height="4"/><rect x="966" y="639" width="2" height="4"/><rect x="971" y="639" width="2" height="4"/><rect x="992" y="639" width="2" height="4"/><rect x="994" y="639" width="2" height="4"/><rect x="999" y="639" width="2" height="4"/><rect x="1002" y="639" width="2" height="4"/><rect x="1007" y="639" width="2" height="4"/><rect x="1009" y="639" width="2" height="4"/><rect x="1015" y="639" width="2" height="4"/><rect x="1017" y="639" width="2" height="4"/><rect x="1020" y="639" width="2" height="4"/><rect x="1022" y="639" width="2" height="4"/><rect x="1027" y="639" width="2" height="4"/><rect x="1030" y="639" width="2" height="4"/><rect x="1035" y="639" width="2" height="4"/><rect x="1038" y="639" width="2" height="4"/><rect x="1040" y="639" width="2" height="4"/><rect x="1045" y="639" width="2" height="4"/><rect x="1048" y="639" width="2" height="4"/><rect x="1050" y="639" width="2" height="4"/><rect x="1055" y="639" width="2" height="4"/><rect x="1058" y="639" width="2" height="4"/><rect x="1061" y="639" width="2" height="4"/><rect x="1066" y="639" width="2" height="4"/><rect x="1068" y="639" width="2" height="4"/><rect x="1071" y="639" width="2" height="4"/><rect x="1076" y="639" width="2" height="4"/><rect x="1078" y="639" width="2" height="4"/><rect x="1081" y="639" width="2" height="4"/><rect x="1083" y="639" width="2" height="4"/><rect x="1094" y="639" width="2" height="4"/><rect x="1099" y="639" width="2" height="4"/><rect x="1101" y="639" width="2" height="4"/><rect x="1104" y="639" width="2" height="4"/><rect x="1109" y="639" width="2" height="4"/><rect x="1112" y="639" width="2" height="4"/><rect x="1117" y="639" width="2" height="4"/><rect x="1119" y="639" width="2" height="4"/><rect x="1122" y="639" width="2" height="4"/><rect x="1127" y="639" width="2" height="4"/><rect x="1135" y="639" width="2" height="4"/><rect x="1137" y="639" width="2" height="4"/><rect x="1150" y="639" width="2" height="4"/><rect x="1152" y="639" width="2" height="4"/><rect x="1175" y="639" width="2" height="4"/><rect x="1186" y="639" width="2" height="4"/><rect x="1188" y="639" width="2" height="4"/><rect x="1193" y="639" width="2" height="4"/><rect x="1196" y="639" width="2" height="4"/><rect x="1201" y="639" width="2" height="4"/><rect x="1203" y="639" width="2" height="4"/><rect x="1209" y="639" width="2" height="4"/><rect x="1211" y="639" width="2" height="4"/><rect x="1214" y="639" width="2" height="4"/><rect x="1216" y="639" width="2" height="4"/><rect x="1226" y="639" width="2" height="4"/><rect x="1229" y="639" width="2" height="4"/><rect x="1234" y="639" width="2" height="4"/><rect x="1237" y="639" width="2" height="4"/><rect x="1239" y="639" width="2" height="4"/><rect x="1244" y="639" width="2" height="4"/><rect x="1247" y="639" width="2" height="4"/><rect x="1249" y="639" width="2" height="4"/><rect x="1252" y="639" width="2" height="4"/><rect x="1257" y="639" width="2" height="4"/><rect x="1260" y="639" width="2" height="4"/><rect x="1262" y="639" width="2" height="4"/><rect x="1267" y="639" width="2" height="4"/><rect x="1270" y="639" width="2" height="4"/><rect x="1272" y="639" width="2" height="4"/><rect x="1275" y="639" width="2" height="4"/><rect x="1288" y="639" width="2" height="4"/><rect x="1290" y="639" width="2" height="4"/><rect x="1293" y="639" width="2" height="4"/><rect x="1298" y="639" width="2" height="4"/><rect x="1301" y="639" width="2" height="4"/><rect x="1303" y="639" width="2" height="4"/><rect x="1306" y="639" width="2" height="4"/><rect x="110" y="632" width="2" height="11"/><rect x="113" y="631" width="2" height="12"/><rect x="115" y="615" width="2" height="28"/><rect x="118" y="612" width="2" height="31"/><rect x="121" y="616" width="2" height="27"/><rect x="124" y="632" width="2" height="11"/><rect x="293" y="632" width="2" height="11"/><rect x="296" y="632" width="2" height="11"/><rect x="466" y="632" width="2" height="11"/><rect x="468" y="632" width="2" height="11"/><rect x="471" y="633" width="2" height="10"/><rect x="633" y="633" width="2" height="10"/><rect x="636" y="633" width="2" height="10"/><rect x="639" y="620" width="2" height="23"/><rect x="641" y="617" width="2" height="26"/><rect x="644" y="619" width="2" height="24"/><rect x="646" y="615" width="2" height="28"/><rect x="649" y="615" width="2" height="28"/><rect x="651" y="616" width="2" height="27"/><rect x="654" y="620" width="2" height="23"/><rect x="656" y="620" width="2" height="23"/><rect x="659" y="617" width="2" height="26"/><rect x="661" y="586" width="2" height="57"/><rect x="664" y="581" width="2" height="62"/><rect x="667" y="595" width="2" height="48"/><rect x="669" y="592" width="2" height="51"/><rect x="672" y="592" width="2" height="51"/><rect x="674" y="593" width="2" height="50"/><rect x="677" y="596" width="2" height="47"/><rect x="679" y="595" width="2" height="48"/><rect x="682" y="598" width="2" height="45"/><rect x="684" y="623" width="2" height="20"/><rect x="687" y="634" width="2" height="9"/><rect x="793" y="634" width="2" height="9"/><rect x="796" y="634" width="2" height="9"/><rect x="798" y="634" width="2" height="9"/><rect x="857" y="634" width="2" height="9"/><rect x="860" y="634" width="2" height="9"/><rect x="862" y="634" width="2" height="9"/><rect x="974" y="634" width="2" height="9"/><rect x="976" y="634" width="2" height="9"/><rect x="979" y="634" width="2" height="9"/><rect x="981" y="622" width="2" height="21"/><rect x="984" y="623" width="2" height="20"/><rect x="986" y="634" width="2" height="9"/><rect x="1085" y="634" width="2" height="9"/><rect x="1088" y="634" width="2" height="9"/><rect x="1091" y="634" width="2" height="9"/><rect x="1129" y="637" width="2" height="6"/><rect x="1132" y="637" width="2" height="6"/><rect x="1141" y="637" width="2" height="6"/><rect x="1144" y="637" width="2" height="6"/><rect x="1154" y="634" width="2" height="9"/><rect x="1157" y="634" width="2" height="9"/><rect x="1159" y="634" width="2" height="9"/><rect x="1162" y="632" width="2" height="11"/><rect x="1164" y="632" width="2" height="11"/><rect x="1167" y="632" width="2" height="11"/><rect x="1169" y="634" width="2" height="9"/><rect x="1172" y="634" width="2" height="9"/><rect x="1174" y="623" width="2" height="20"/><rect x="1177" y="624" width="2" height="19"/><rect x="1179" y="623" width="2" height="20"/><rect x="1182" y="635" width="2" height="8"/><rect x="1218" y="635" width="2" height="8"/><rect x="1221" y="634" width="2" height="9"/><rect x="1223" y="635" width="2" height="8"/><rect x="1281" y="635" width="2" height="8"/><rect x="1284" y="635" width="2" height="8"/><rect x="1286" y="635" width="2" height="8"/></g>
<g stroke="#000" stroke-width="1" fill="none" shape-rendering="crispEdges">
<path d="M22.5 242.5H1315.5V563.5H22.5Z"/><path d="M22.5 644V565.5H1315.5V644"/><path d="M22 643.5H1316"/><line x1="55.5" y1="643" x2="55.5" y2="647"/><line x1="119.5" y1="643" x2="119.5" y2="647"/><line x1="183.5" y1="643" x2="183.5" y2="647"/><line x1="247.5" y1="643" x2="247.5" y2="647"/><line x1="311.5" y1="643" x2="311.5" y2="647"/><line x1="375.5" y1="643" x2="375.5" y2="647"/><line x1="439.5" y1="643" x2="439.5" y2="647"/><line x1="503.5" y1="643" x2="503.5" y2="647"/><line x1="567.5" y1="643" x2="567.5" y2="647"/><line x1="631.5" y1="643" x2="631.5" y2="647"/><line x1="695.5" y1="643" x2="695.5" y2="647"/><line x1="759.5" y1="643" x2="759.5" y2="647"/><line x1="823.5" y1="643" x2="823.5" y2="647"/><line x1="887.5" y1="643" x2="887.5" y2="647"/><line x1="951.5" y1="643" x2="951.5" y2="647"/><line x1="1015.5" y1="643" x2="1015.5" y2="647"/><line x1="1079.5" y1="643" x2="1079.5" y2="647"/><line x1="1143.5" y1="643" x2="1143.5" y2="647"/><line x1="1207.5" y1="643" x2="1207.5" y2="647"/><line x1="1271.5" y1="643" x2="1271.5" y2="647"/><line x1="1316" y1="274.5" x2="1319" y2="274.5"/><line x1="1316" y1="306.5" x2="1319" y2="306.5"/><line x1="1316" y1="338.5" x2="1319" y2="338.5"/><line x1="1316" y1="370.5" x2="1319" y2="370.5"/><line x1="1316" y1="402.5" x2="1319" y2="402.5"/><line x1="1316" y1="434.5" x2="1319" y2="434.5"/><line x1="1316" y1="466.5" x2="1319" y2="466.5"/><line x1="1316" y1="498.5" x2="1319" y2="498.5"/><line x1="1316" y1="530.5" x2="1319" y2="530.5"/><line x1="1316" y1="562.5" x2="1319" y2="562.5"/>
<line x1="1316" y1="566.5" x2="1319" y2="566.5"/><line x1="1316" y1="643.5" x2="1319" y2="643.5"/></g>
<g font-family="'Liberation Sans',sans-serif" font-size="9.7" fill="#000" stroke="#000" stroke-width="0.18"><text x="1319.6" y="278" textLength="20.4" lengthAdjust="spacing">1418</text><text x="1319.6" y="310" textLength="20.4" lengthAdjust="spacing">1349</text><text x="1319.6" y="342" textLength="20.4" lengthAdjust="spacing">1281</text><text x="1319.6" y="374" textLength="20.4" lengthAdjust="spacing">1212</text><text x="1319.6" y="406" textLength="20.4" lengthAdjust="spacing">1144</text><text x="1319.6" y="438" textLength="20.4" lengthAdjust="spacing">1076</text><text x="1319.6" y="470" textLength="20.4" lengthAdjust="spacing">1007</text><text x="1319.6" y="502" textLength="15.3" lengthAdjust="spacing">939</text><text x="1319.6" y="534" textLength="15.3" lengthAdjust="spacing">870</text><text x="1319.6" y="566" textLength="15.3" lengthAdjust="spacing">802</text>
<rect x="1317" y="566" width="43" height="11" fill="#fff"/><text x="1319.6" y="575" textLength="32.6" lengthAdjust="spacing">100.0%</text>
<text x="24" y="654.3" textLength="46" lengthAdjust="spacing">2026.04.01</text><text x="88" y="654.3" textLength="46" lengthAdjust="spacing">2026.04.02</text><text x="152" y="654.3" textLength="46" lengthAdjust="spacing">2026.04.02</text><text x="216" y="654.3" textLength="46" lengthAdjust="spacing">2026.04.06</text><text x="280" y="654.3" textLength="46" lengthAdjust="spacing">2026.04.06</text><text x="344" y="654.3" textLength="46" lengthAdjust="spacing">2026.04.07</text><text x="408" y="654.3" textLength="46" lengthAdjust="spacing">2026.04.08</text><text x="472" y="654.3" textLength="46" lengthAdjust="spacing">2026.04.08</text><text x="536" y="654.3" textLength="46" lengthAdjust="spacing">2026.04.10</text><text x="600" y="654.3" textLength="46" lengthAdjust="spacing">2026.04.13</text><text x="664" y="654.3" textLength="46" lengthAdjust="spacing">2026.04.13</text><text x="728" y="654.3" textLength="46" lengthAdjust="spacing">2026.04.14</text><text x="792" y="654.3" textLength="46" lengthAdjust="spacing">2026.04.14</text><text x="856" y="654.3" textLength="46" lengthAdjust="spacing">2026.04.16</text><text x="920" y="654.3" textLength="46" lengthAdjust="spacing">2026.04.17</text><text x="984" y="654.3" textLength="46" lengthAdjust="spacing">2026.04.20</text><text x="1048" y="654.3" textLength="46" lengthAdjust="spacing">2026.04.20</text><text x="1112" y="654.3" textLength="46" lengthAdjust="spacing">2026.04.21</text><text x="1176" y="654.3" textLength="46" lengthAdjust="spacing">2026.04.22</text><text x="1240" y="654.3" textLength="46" lengthAdjust="spacing">2026.04.23</text><text x="1304" y="654.3" textLength="46" lengthAdjust="spacing">2026.04.24</text>
<rect x="1319" y="637" width="26" height="11" fill="#fff"/><text x="1319.6" y="647" textLength="22.5" lengthAdjust="spacing">0.0%</text>
<text x="26" y="254.3" fill="#0000b0" stroke="none" textLength="68.4" lengthAdjust="spacing">Balance <tspan fill="#404040">/</tspan> <tspan fill="#00a800">Equity</tspan></text>
<text x="26.4" y="577.3" textLength="52.4" lengthAdjust="spacing">Deposit Load</text></g>
<polyline points="22.9,471 33,470.2 35.1,479.3 37.8,469.8 42.5,469.4 44.7,475.9 48.2,469 53,468.6 55.1,469.8 57,468.3 105.7,464.9 111.4,475.9 114.9,496.6 117.2,519.6 119,550.6 120.6,519.6 121.8,487.4 124.1,459.8 129.6,458.8 131,458.6 131.5,458.6 133.3,459.9 135,458.3 229.9,451 236,450.4 239.5,448.3 259,448.1 290,445.7 296.9,466.9 299.2,444.6 304,443.5 306,446.5 308,442.6 309.6,442.3 322,440.9 325.2,448.3 327,440.3 328,440.2 353,438.4 355.1,441.2 357,437.1 357.9,436.8 362.5,436.1 364.8,439.8 367,435.4 374,434.3 377.4,432 388.5,431.2 391.2,437.5 393,430.9 397,430.6 406.2,428.7 431,426.6 433.8,433.4 436,426.2 436.1,426.2 456,424.5 462.5,425.2 464,433.5 466.9,434.3 469,442.2 470.5,437.9 471.9,422.5 476.3,423.2 479.2,425.2 482,421 503,419.7 505.9,416.8 509,416.6 511,418.4 513.5,416.2 513.9,416.2 520,415.6 522.6,418.4 525,415.2 540,414.9 542.8,416.5 545,414.5 551,413.3 553,415.2 555,412.7 568,412.3 571,414.3 573.5,410.9 583.4,410.3 597.8,409.1 606.5,408 616,407.6 618.8,409.3 621,407.4 629.8,407.2 631.9,413.8 635,417.9 637.1,436.7 640.8,446 641.7,467.9 642.3,486.7 643.3,457.5 644.8,435.6 647.1,444 649.6,445 654.8,437.7 657.5,434.6 659,453.3 660,467.9 661,484.6 663.1,492.9 664.2,515.8 665.2,530 665.8,488.8 666.7,447.1 667.7,405.4 669.4,403.8 672.5,404.4 677.7,397.5 679.8,404.4 681,392.1 682.9,367.9 684.8,351 685.7,345 693.2,344.9 695,345 707.4,344.7 708.8,343.7 723.5,343.4 726.2,347.2 729,342.9 734,342.3 736,344 738,341.8 744,341.7 746.4,344.5 748.5,341.6 755.1,341.5 758,339.7 765.3,337.9 782.6,336.5 785.5,334 789.9,333.8 797.1,349 800,332 805,331.9 807.2,335.2 809.5,331.7 815,331.5 817.4,334.1 820,330.4 820.2,330.3 828.9,330 831.5,329.9 834.7,336.3 837.5,329.6 843,329.4 845.6,332.3 848,329.2 853.5,329 855.7,337.8 858.6,338.5 859.6,360.2 860.8,360.2 862.2,337.8 862.9,326.9 864,326.3 880,325.9 897.4,323.7 901.5,323.5 903.9,326.6 906,323.4 914.7,323 922,320.8 941,318.4 943.7,320.2 946,317.9 960.3,317.1 962.2,325 965.4,316.9 970.4,316.8 972.6,325.7 974.8,326.7 976.7,320.6 978.1,321.4 979.1,339.5 980.6,352.5 982,355.1 983.5,345.2 984.9,327.9 987.1,317 990,316 995.8,316 997.9,320.9 1000.1,315 1004.5,314.6 1005.9,314.1 1007.8,321.8 1009.8,313 1016,314 1023.3,312.9 1027.6,310.7 1030,310.4 1032,312.3 1034,310 1036.3,309.7 1041.5,309.6 1043.5,311.1 1045.5,309.5 1053.7,309.2 1058.5,308.6 1060.9,311.2 1063,308.1 1069,307.8 1071.3,311.2 1072.9,307.7 1080.8,307.7 1083.8,316.5 1088.8,317.9 1090.3,315.8 1092.4,305.7 1096.5,305.5 1098.9,307.8 1102.6,304.9 1110.5,303.9 1119.9,302.9 1122.1,303.6 1125,303.6 1127.2,311.1 1130.8,307.8 1138,307.4 1140.9,305.6 1149.6,305.6 1152.5,309.7 1156.1,309.7 1158.3,307.4 1159,315.8 1160,331 1162.6,322.3 1164.8,322.7 1167.7,319.4 1169.9,319.8 1173,330.2 1175.3,332.1 1176.8,320.1 1177.8,297.7 1178.8,297.7 1179.5,336 1180.7,335.5 1181.7,315.8 1182.9,294.8 1184.3,292.9 1187.9,292.6 1190,292.7 1191,292.7 1193.3,296.2 1195.2,292.5 1203.9,292.1 1206,291.3 1213.3,291.2 1216.2,301.3 1219.1,302.5 1220.5,320.8 1221.7,320.8 1222.7,302.8 1224.1,289.6 1232.1,289.5 1236,289.2 1238,290 1240,288.9 1250.9,288 1260,286.8 1267.2,286.6 1269,295.2 1270.1,293 1272.3,285.6 1275.9,285.5 1279.5,293.8 1283,298.1 1284.9,303.1 1285.9,301 1287.1,283.6 1300.3,283.3 1302,289.2 1305.3,282.6 1311,282.6" fill="none" stroke="#00ac00" stroke-width="2" stroke-linejoin="round" shape-rendering="crispEdges"/>
<polyline points="22.9,470.1 116,462.6 118.3,436.8 121,435.6 123.6,435.6 127.5,446 129.2,457.5 129.6,457.8 229.9,450.1 236,449.5 239.5,447.4 259,447.2 295.8,444.4 309.6,441.4 328,439.3 353.3,437.5 357.9,435.9 374,433.4 377.4,431.1 397,429.7 406.2,427.8 436.1,425.3 456.8,423.2 458.2,423.9 467.6,423.9 470.5,422 477.7,422 481.3,420.1 503,418.8 505.9,415.9 513.9,415.3 524.7,414.3 542.8,414 554.4,411.8 568.9,411.4 573.2,410 583.4,409.4 597.8,408.2 606.5,407.1 619.5,406.5 647.5,406 650,385.4 662.3,385.2 663,386 670.7,386 672.1,358.5 673.6,344.9 678.8,344.9 679.5,317.4 680.1,289.3 682,288.6 684.8,288.6 688.5,298.7 690.4,317.4 693.2,344.1 707.4,343.8 708.8,342.8 726.2,342.4 737.8,340.9 755.1,340.6 758,338.8 765.3,337 782.6,335.6 785.5,333.1 795.6,332.7 798.5,331.2 817.4,330.5 820.2,329.4 828.9,329.1 846.3,328.4 858.6,327.9 862.2,325.5 880,325 897.4,322.8 914.7,322.1 922,319.9 945.1,317 963.9,316 982,315.7 984.2,303.3 985.4,293.9 987.1,293.4 989.3,298.2 991.4,306.2 993.2,314.6 1004.5,313.7 1009.5,312 1016,313.1 1023.3,312 1027.6,309.8 1036.3,308.8 1053.7,308.4 1062.3,307.2 1070,306.8 1086.6,306.8 1090.3,304.9 1098.9,304.5 1110.5,303 1119.9,302 1122.1,302.8 1130.8,302.5 1133.7,301 1145.2,300.7 1148.1,299.9 1163.3,299.6 1165.5,293.4 1175.6,292.9 1177.1,281 1178.2,271.6 1182.9,270.6 1185,274.5 1186.9,282.5 1187.9,291.9 1203.9,291.2 1206,290.4 1219.8,290.2 1222.7,288.7 1232.1,288.6 1250.9,287.1 1260,285.9 1268.7,285.6 1271.5,284.7 1283,284.4 1286.6,282.7 1302.4,282.3 1304.6,281.7 1311,281.7" fill="none" stroke="#0000b0" stroke-width="2" stroke-linejoin="round" shape-rendering="crispEdges"/>
</svg>
<div class="t gr" style="left:33.3px;top:662.5px;letter-spacing:-0.159px;">Overview</div>
<div class="t gr" style="left:101.9px;top:662.5px;letter-spacing:-0.123px;">Settings</div>
<div class="t gr" style="left:163.4px;top:662.5px;letter-spacing:0.259px;">Inputs</div>
<div class="t gr" style="left:216.8px;top:662.5px;letter-spacing:-0.204px;">Backtest</div>
<div class="t gr" style="left:332.8px;top:662.5px;letter-spacing:-0.052px;">Agents</div>
<div class="t gr" style="left:389.6px;top:662.5px;letter-spacing:-0.143px;">Journal</div>
<div class="vl" style="left:92px;top:665px;height:14px;background:#707070"></div>
<div class="vl" style="left:154px;top:665px;height:14px;background:#707070"></div>
<div class="vl" style="left:207px;top:665px;height:14px;background:#707070"></div>
<div class="vl" style="left:380px;top:665px;height:14px;background:#707070"></div>
<div class="abs" style="left:271px;top:660px;width:52px;height:20px;background:#fff;border:1px solid #000;border-top:none;box-shadow:1px 1px 0 #707070"></div>
<div class="t " style="left:281.0px;top:662.5px;letter-spacing:-0.315px;">Graph</div>
<div class="t " style="left:1180.4px;top:665.5px;letter-spacing:-0.402px;color:#101030">00:08:14 / 00:08:14</div>
<div class="abs" style="left:1285px;top:663px;width:74px;height:18px;background:#92c353"></div>
<div class="t " style="left:1309.4px;top:665.5px;letter-spacing:-0.036px;">Start</div>
<div class="hl" style="left:0;top:685px;width:1360px"></div>
<div class="abs" style="left:0;top:686px;width:1360px;height:10px;background:#fafafa"></div>
<div class="t " style="left:2.4px;top:689.5px;">For Help, press F1</div>
<div class="t " style="left:672.4px;top:689.5px;">Default</div>
<div class="t " style="left:1264.4px;top:689.5px;">8.7 / 34.8 Mb</div>
<div class="vl" style="left:667px;top:688px;height:8px;background:#a0a0a0"></div>
<div class="vl" style="left:796px;top:688px;height:8px;background:#a0a0a0"></div>
<div class="vl" style="left:894px;top:688px;height:8px;background:#a0a0a0"></div>
<div class="vl" style="left:965px;top:688px;height:8px;background:#a0a0a0"></div>
<div class="vl" style="left:1036px;top:688px;height:8px;background:#a0a0a0"></div>
<div class="vl" style="left:1103px;top:688px;height:8px;background:#a0a0a0"></div>
<div class="vl" style="left:1173px;top:688px;height:8px;background:#a0a0a0"></div>
<div class="vl" style="left:1240px;top:688px;height:8px;background:#a0a0a0"></div>
<svg class="abs" style="left:0;top:0" width="1360" height="210" viewBox="0 0 1360 210" fill="none" stroke-linecap="round" stroke-linejoin="round">
<rect x="2" y="3" width="16" height="16" fill="#000"/>
<g font-family="'Liberation Sans',sans-serif" font-weight="bold"><text x="9.6" y="9.4" font-size="7.4" fill="#27d03a" letter-spacing="-0.5">IC</text><text x="4" y="13" font-size="3.3" fill="#fff" stroke="#fff" stroke-width="0.15">Markets</text><text x="4" y="16.8" font-size="3.9" fill="#27d03a" stroke="#27d03a" stroke-width="0.2">Global</text></g>
<path d="M4.5 9.3V8.2M6 9.3V6.6M7.5 9.3V7.4M9 9.3V8.4" stroke="#fff" stroke-width="1" stroke-linecap="butt"/>
<g stroke="#000" stroke-width="1" stroke-linecap="butt" shape-rendering="crispEdges"><path d="M1239 10.5H1249"/><path d="M1284.5 7.5H1291.5V14.5H1284.5Z"/><path d="M1286.5 7.5V5.5H1293.5V12.5H1291.5"/></g>
<path d="M1330.5 5.5L1340 15M1340 5.5L1330.5 15" stroke="#000" stroke-width="1.1"/>
<g stroke="#1fa838" stroke-width="1.3" fill="#d6f7d8" stroke-linecap="butt"><path d="M10.5 25.5V39.5M16.5 25.5V39.5"/><rect x="8.5" y="28.5" width="4" height="8"/><rect x="14.5" y="28.5" width="4" height="8"/></g>
<g fill="#a8a8a8" stroke="none"><rect x="1308" y="34" width="8" height="2"/><path d="M1327 30H1333V36H1327ZM1329 32V34H1331V32Z" fill-rule="evenodd"/><path d="M1329.5 28H1335.5V34H1334.5V29H1329.5Z"/><path d="M1346 30H1348.2L1349.6 31.9L1351 30H1353.2L1350.7 33L1353.2 36H1351L1349.6 34.1L1348.2 36H1346L1348.5 33Z"/></g>
<g stroke="none" shape-rendering="crispEdges"><rect x="2" y="47" width="1" height="1" fill="#a0a0a0"/><rect x="3" y="46" width="1" height="1" fill="#b8b8b8"/><rect x="2" y="51" width="1" height="1" fill="#a0a0a0"/><rect x="3" y="50" width="1" height="1" fill="#b8b8b8"/><rect x="2" y="55" width="1" height="1" fill="#a0a0a0"/><rect x="3" y="54" width="1" height="1" fill="#b8b8b8"/><rect x="2" y="59" width="1" height="1" fill="#a0a0a0"/><rect x="3" y="58" width="1" height="1" fill="#b8b8b8"/><rect x="2" y="63" width="1" height="1" fill="#a0a0a0"/><rect x="3" y="62" width="1" height="1" fill="#b8b8b8"/><rect x="2" y="67" width="1" height="1" fill="#a0a0a0"/><rect x="3" y="66" width="1" height="1" fill="#b8b8b8"/><rect x="2" y="71" width="1" height="1" fill="#a0a0a0"/><rect x="3" y="70" width="1" height="1" fill="#b8b8b8"/><rect x="2" y="76" width="1" height="1" fill="#a0a0a0"/><rect x="3" y="75" width="1" height="1" fill="#b8b8b8"/><rect x="2" y="80" width="1" height="1" fill="#a0a0a0"/><rect x="3" y="79" width="1" height="1" fill="#b8b8b8"/><rect x="2" y="84" width="1" height="1" fill="#a0a0a0"/><rect x="3" y="83" width="1" height="1" fill="#b8b8b8"/><rect x="2" y="88" width="1" height="1" fill="#a0a0a0"/><rect x="3" y="87" width="1" height="1" fill="#b8b8b8"/><rect x="2" y="92" width="1" height="1" fill="#a0a0a0"/><rect x="3" y="91" width="1" height="1" fill="#b8b8b8"/><rect x="2" y="96" width="1" height="1" fill="#a0a0a0"/><rect x="3" y="95" width="1" height="1" fill="#b8b8b8"/><rect x="2" y="100" width="1" height="1" fill="#a0a0a0"/><rect x="3" y="99" width="1" height="1" fill="#b8b8b8"/><rect x="312" y="76" width="1" height="1" fill="#a0a0a0"/><rect x="313" y="75" width="1" height="1" fill="#b8b8b8"/><rect x="312" y="80" width="1" height="1" fill="#a0a0a0"/><rect x="313" y="79" width="1" height="1" fill="#b8b8b8"/><rect x="312" y="84" width="1" height="1" fill="#a0a0a0"/><rect x="313" y="83" width="1" height="1" fill="#b8b8b8"/><rect x="312" y="88" width="1" height="1" fill="#a0a0a0"/><rect x="313" y="87" width="1" height="1" fill="#b8b8b8"/><rect x="312" y="92" width="1" height="1" fill="#a0a0a0"/><rect x="313" y="91" width="1" height="1" fill="#b8b8b8"/><rect x="312" y="96" width="1" height="1" fill="#a0a0a0"/><rect x="313" y="95" width="1" height="1" fill="#b8b8b8"/><rect x="312" y="100" width="1" height="1" fill="#a0a0a0"/><rect x="313" y="99" width="1" height="1" fill="#b8b8b8"/></g>
<path d="M13.5 51V67.5H30" stroke="#a0a0a0" stroke-width="1" stroke-linecap="butt"/>
<path d="M16.4 60L19.8 56.5L24.6 61.7L29.7 56.5" stroke="#1f6db5" stroke-width="1.3"/>
<path d="M36 59H43L39.5 63Z" fill="#000" stroke="none"/>
<rect x="53.6" y="50.6" width="18" height="14" rx="2.2" fill="#fff" stroke="#1f6db5" stroke-width="1.4"/>
<path d="M56.5 57.4L60.3 54.3L64.2 56.5L69 53.3" stroke="#1f6db5" stroke-width="1.1"/>
<path d="M56.5 61.7V60M59.5 61.7V58.4M62.5 61.7V59.6M65.5 61.7V59.2M68.5 61.7V58.2" stroke="#1fa838" stroke-width="1.2" stroke-linecap="butt"/>
<path d="M55.3 66.6H70.2M57.5 68.7H68" stroke="#1f6db5" stroke-width="1.1"/><path d="M55.3 66.6L57.5 68.7M70.2 66.6L68 68.7" stroke="#1f6db5" stroke-width="1"/>
<path d="M77 59H84L80.5 63Z" fill="#000" stroke="none"/>
<rect x="97.6" y="51.5" width="16" height="16" rx="2" fill="#ffd200" stroke="#d8a214" stroke-width="1.1"/>
<text x="105.6" y="64" font-family="'Liberation Sans',sans-serif" font-size="12.5" fill="#c9961c" text-anchor="middle" stroke="none">$</text>
<path d="M171.6 57.5V54.5A2.4 2.6 0 0 1 176.4 54.5V57.5M175 57.5V54.5A2.4 2.6 0 0 1 179.8 54.5V57.5" stroke="#d09a14" stroke-width="1.1"/>
<path d="M169.5 55.8H181.6L182.6 67.2H168.5Z" fill="#ffd200" stroke="#d09a14" stroke-width="1.1"/>
<path d="M170.8 56L170.2 67" stroke="#e2ac10" stroke-width="1"/>
<g stroke="#c4c4c4" stroke-width="1.2"><circle cx="207.5" cy="59.3" r="1.8"/><path d="M203.9 56.2A4.8 4.8 0 0 0 203.9 62.4M211.1 56.2A4.8 4.8 0 0 1 211.1 62.4M201.2 54.1A8.2 8.2 0 0 0 201.2 64.5M213.8 54.1A8.2 8.2 0 0 1 213.8 64.5"/></g>
<path d="M235 62.3A3.2 3.2 0 0 1 234.4 56A4.6 4.6 0 0 1 243.2 54.6A3.9 3.9 0 0 1 244.6 62.3Z" fill="#bde0ff" stroke="#1f6db5" stroke-width="1.3"/>
<path d="M231.2 65.4H248M239.5 62.5V65.4" stroke="#1f6db5" stroke-width="1.2"/><circle cx="239.5" cy="65.6" r="1.2" fill="#1f6db5" stroke="none"/>
<g stroke="#1f6db5" stroke-width="1.2"><circle cx="271.5" cy="59.2" r="2.2" fill="#bde0ff"/><path d="M277 58A5.6 5.6 0 1 0 270 64.6M279.9 58A8.5 8.5 0 1 0 268.5 67.2"/></g>
<circle cx="275.6" cy="63.8" r="4.8" fill="#d6f7d8" stroke="#1fa838" stroke-width="1.4"/><path d="M272.6 63.8H278.6M275.6 60.8V66.8" stroke="#1fa838" stroke-width="1.4" stroke-linecap="butt"/>
<path d="M303.6 54.5V64.6L312.6 59.5Z" fill="#d6f7d8" stroke="#1fa838" stroke-width="1.4"/>
<path d="M406.6 51.8H414.6A2 2 0 0 1 416.6 53.8V63.3L412.4 67.5H406.6A2 2 0 0 1 404.6 65.5V53.8A2 2 0 0 1 406.6 51.8Z" fill="#fff" stroke="#1f6db5" stroke-width="1.3"/>
<path d="M416.4 63.6H412.6V67.3Z" fill="#1f6db5" stroke="#1f6db5" stroke-width="0.8"/><path d="M407.2 58.2H413.6M410.4 55V61.4" stroke="#1f6db5" stroke-width="1.2" stroke-linecap="butt"/>
<path d="M506.5 55.3V67.6M503 64.6H506.5M506.5 58.4H510M516.5 51.2V63.8M513 54.5H516.5M516.5 60.4H520" stroke="#1fa838" stroke-width="1.3" stroke-linecap="butt"/>
<g stroke="#1fa838" stroke-width="1.3" fill="#d6f7d8" stroke-linecap="butt"><path d="M539.5 52V66.7M547.6 51.1V67.6"/><rect x="537.3" y="54.2" width="4.4" height="10.4"/><rect x="545.4" y="53.3" width="4.4" height="12"/></g>
<path d="M567 62.2H569.2L571.8 56.6L575.5 64.7L579.4 54.6L581.8 59.6H584" stroke="#1fa838" stroke-width="1.3"/>
<circle cx="611.5" cy="57.6" r="5.9" fill="#bde0ff" stroke="#1f6db5" stroke-width="1.3"/><path d="M615.8 62L621.8 67.6" stroke="#1f6db5" stroke-width="1.3"/>
<path d="M608.3 57.6H614.7M611.5 54.4V60.8" stroke="#1f6db5" stroke-width="1.2" stroke-linecap="butt"/>
<circle cx="643.4" cy="57.6" r="5.9" fill="#bde0ff" stroke="#1f6db5" stroke-width="1.3"/><path d="M647.6999999999999 62L653.6999999999999 67.6" stroke="#1f6db5" stroke-width="1.3"/>
<path d="M640.1999999999999 57.6H646.6" stroke="#1f6db5" stroke-width="1.2" stroke-linecap="butt"/>
<rect x="669.8" y="52" width="15.4" height="15.2" rx="2" fill="#bde0ff" stroke="#1f6db5" stroke-width="1.5"/><path d="M677.5 52V67.2M669.8 59.6H685.2" stroke="#1f6db5" stroke-width="1.4"/>
<g stroke="#1fa838" stroke-width="1.1" fill="#d6f7d8" stroke-linecap="butt"><path d="M707.4 53.1V63.8M711.6 52V64.8"/><rect x="706.3" y="54.6" width="2.2" height="7.6"/><rect x="710.5" y="53.7" width="2.2" height="9"/></g>
<path d="M715 58.4H721.3M718.4 55L721.5 58.4L718.4 61.8" stroke="#1fa838" stroke-width="1.3"/><path d="M724.5 51V65.7" stroke="#1f6db5" stroke-width="1.5" stroke-linecap="butt"/>
<path d="M706 68.5H725M738 68.5H757" stroke="#a8a8a8" stroke-width="1" stroke-linecap="butt"/>
<g stroke="#1fa838" stroke-width="1.1" fill="#d6f7d8" stroke-linecap="butt"><path d="M739.4 53.1V63.8M743.6 52V64.8"/><rect x="738.3" y="54.6" width="2.2" height="7.6"/><rect x="742.5" y="53.7" width="2.2" height="9"/></g>
<path d="M747.5 51V65.7" stroke="#1f6db5" stroke-width="1.5" stroke-linecap="butt"/><path d="M757 58.4H750.8M753.8 55L750.6 58.4L753.8 61.8" stroke="#1f6db5" stroke-width="1.3"/>
<rect x="776.8" y="50.8" width="17.6" height="17.6" rx="2.5" stroke="#1f6db5" stroke-width="1.2" stroke-dasharray="2.4 2.6" stroke-linecap="butt"/>
<path d="M781.6 68.3V61.5A1.2 1.2 0 0 1 782.8 60.3H784.6L785.8 57.8H790.6L791.8 60.3H793.4A1.2 1.2 0 0 1 794.6 61.5V68.3Z" fill="#bde0ff" stroke="#1f6db5" stroke-width="1.3"/>
<rect x="780.5" y="59" width="15" height="10.2" fill="#f0f0f0" stroke="none" opacity="0"/>
<circle cx="788.1" cy="63.9" r="2" stroke="#1f6db5" stroke-width="1.2" fill="#d8eeff"/>
<circle cx="1226.8" cy="58.6" r="5.2" stroke="#1a1a1a" stroke-width="1.2"/><path d="M1230.6 62.6L1233.8 65.9" stroke="#1a1a1a" stroke-width="1.3"/>
<circle cx="1262.4" cy="59.4" r="6" stroke="#1a1a1a" stroke-width="1.2"/><circle cx="1262.4" cy="57.3" r="2" stroke="#1a1a1a" stroke-width="1.1"/><path d="M1258.4 63.6A4.4 3.6 0 0 1 1266.4 63.6" stroke="#1a1a1a" stroke-width="1.1"/>
<path d="M1295.5 51.8L1299.2 56H1297V59.4H1294V56H1291.8Z" stroke="#1fa838" stroke-width="1.1" fill="#fff"/>
<text x="1295.8" y="67" font-family="'Liberation Sans',sans-serif" font-size="6.8" font-weight="bold" fill="#1fa838" text-anchor="middle" stroke="none" letter-spacing="-0.2">LVL</text>
<rect x="1311.5" y="53.5" width="41" height="13" fill="#fff" stroke="#8c8c8c" stroke-width="1" shape-rendering="crispEdges"/><rect x="1312" y="54" width="23" height="12" fill="#3fdc3f" stroke="none" shape-rendering="crispEdges"/>
<path d="M17.3 82.5L29.6 86.8L26 89.8L29.8 93.6L28 95L24.1 91.3L21.2 94.4Z" fill="#bde0ff" stroke="#1f6db5" stroke-width="1.2"/>
<path d="M47 88.6H63.8M55.4 80.2V96.8" stroke="#1f6db5" stroke-width="1.2" stroke-linecap="butt"/><circle cx="55.4" cy="88.6" r="2" fill="#bde0ff" stroke="#1f6db5" stroke-width="1"/>
<path d="M93.5 79.2V97.9" stroke="#1f6db5" stroke-width="1.3" stroke-linecap="butt"/><circle cx="93.5" cy="88.6" r="2.2" fill="#bde0ff" stroke="#1f6db5" stroke-width="1.2"/>
<path d="M116 88.6H135" stroke="#1f6db5" stroke-width="1.3" stroke-linecap="butt"/><circle cx="125.5" cy="88.6" r="2.2" fill="#bde0ff" stroke="#1f6db5" stroke-width="1.2"/>
<path d="M150.5 95.5L164.4 81.5" stroke="#1f6db5" stroke-width="1.3"/><circle cx="164.4" cy="81.5" r="2.2" fill="#bde0ff" stroke="#1f6db5" stroke-width="1.2"/><circle cx="150.5" cy="95.5" r="2.2" fill="#bde0ff" stroke="#1f6db5" stroke-width="1.2"/>
<path d="M182.4 89.3L190.3 81.5M188.4 95.5L198.8 85.2" stroke="#1f6db5" stroke-width="1.3"/><circle cx="190.3" cy="81.5" r="2.2" fill="#bde0ff" stroke="#1f6db5" stroke-width="1.2"/><circle cx="182.4" cy="89.3" r="2.2" fill="#bde0ff" stroke="#1f6db5" stroke-width="1.2"/><circle cx="188.4" cy="95.5" r="2.2" fill="#bde0ff" stroke="#1f6db5" stroke-width="1.2"/>
<path d="M212.2 80.5H230.7M212.2 85.5H226.5M212.8 90.6H230.7M216.5 95.6H230.7" stroke="#1f6db5" stroke-width="1.3" stroke-linecap="butt"/><circle cx="228.5" cy="85.5" r="2.2" fill="#bde0ff" stroke="#1f6db5" stroke-width="1.2"/><circle cx="214.5" cy="95.6" r="2.2" fill="#bde0ff" stroke="#1f6db5" stroke-width="1.2"/>
<path d="M247 82.4H260M253.5 82.4V94.9" stroke="#1f6db5" stroke-width="1.3" stroke-linecap="butt"/>
<g fill="#bde0ff" stroke="#1f6db5" stroke-width="1.2"><path d="M279 80.8L282.6 86.3H275.4Z"/><circle cx="288.5" cy="83.6" r="3.1"/><path d="M279 90.2L282.6 92.8L281.2 96.6H276.8L275.4 92.8Z"/><rect x="285.6" y="90.7" width="6" height="5.8" rx="0.8"/></g>
<path d="M298 88H305L301.5 92Z" fill="#000" stroke="none"/>
<path d="M254.5 109.3L261.3 115.7M261.3 109.3L254.5 115.7" stroke="#000" stroke-width="1.5" stroke-linecap="butt"/>
<g stroke="#808080" stroke-width="1" stroke-dasharray="1 1" stroke-linecap="butt" shape-rendering="crispEdges"><path d="M12.5 123V176M33.5 123V176M54.5 123V176M55 133.5H65M55 153.5H65M55 173.5H65"/></g>
<g><path d="M71.2 131.9V135.5C73 137.7 78 137.7 79.8 135.5V131.9" fill="#bde0ff" stroke="#1f6db5" stroke-width="1.2"/><path d="M75.4 127.3L83 130.6L75.4 133.3L68 130.6Z" fill="#bde0ff" stroke="#1f6db5" stroke-width="1.2"/><path d="M68.9 131.1V136.7" stroke="#1f6db5" stroke-width="1.1"/><circle cx="69.3" cy="137.6" r="1.1" fill="#bde0ff" stroke="#1f6db5" stroke-width="0.9"/></g><g><path d="M71.2 151.9V155.5C73 157.70000000000002 78 157.70000000000002 79.8 155.5V151.9" fill="#bde0ff" stroke="#1f6db5" stroke-width="1.2"/><path d="M75.4 147.3L83 150.60000000000002L75.4 153.3L68 150.60000000000002Z" fill="#bde0ff" stroke="#1f6db5" stroke-width="1.2"/><path d="M68.9 151.10000000000002V156.70000000000002" stroke="#1f6db5" stroke-width="1.1"/><circle cx="69.3" cy="157.60000000000002" r="1.1" fill="#bde0ff" stroke="#1f6db5" stroke-width="0.9"/></g>
<svg x="60" y="160" width="40" height="17" viewBox="60 160 40 17"><g><path d="M71.2 171.9V175.5C73 177.70000000000002 78 177.70000000000002 79.8 175.5V171.9" fill="#bde0ff" stroke="#1f6db5" stroke-width="1.2"/><path d="M75.4 167.3L83 170.60000000000002L75.4 173.3L68 170.60000000000002Z" fill="#bde0ff" stroke="#1f6db5" stroke-width="1.2"/><path d="M68.9 171.10000000000002V176.70000000000002" stroke="#1f6db5" stroke-width="1.1"/><circle cx="69.3" cy="177.60000000000002" r="1.1" fill="#bde0ff" stroke="#1f6db5" stroke-width="0.9"/></g></svg>
<path d="M256.5 134.2L260 130.7L263.5 134.2M256.5 166.8L260 170.3L263.5 166.8" stroke="#5a5a5a" stroke-width="1.7" stroke-linecap="butt" stroke-linejoin="miter"/>
<path d="M1326 188.5V194.5L1322.5 191.5ZM1344 188.5V194.5L1347.5 191.5Z" fill="#b8b8b8" stroke="none"/>
</svg>
<svg class="abs" style="left:0;top:207px" width="40" height="60" viewBox="0 207 40 60" fill="none">
<path d="M4.5 214.8L11 221M11 214.8L4.5 221M4.5 245.8L11 252M11 245.8L4.5 252" stroke="#000" stroke-width="1.6" stroke-linecap="butt"/>
<circle cx="30.3" cy="219.6" r="4.9" stroke="#1a1a1a" stroke-width="1.1"/><path d="M27.6 219.6H33" stroke="#1a1a1a" stroke-width="1.1"/>
</svg>
<svg class="abs" style="left:1248px;top:686px" width="12" height="10" viewBox="0 0 12 10"><path d="M3 10V8M5.5 10V6" stroke="#1fa838" stroke-width="1.4"/><path d="M8 10V3.5M10.5 10V1" stroke="#c8c8c8" stroke-width="1.4"/></svg>
</div>
</body></html>
